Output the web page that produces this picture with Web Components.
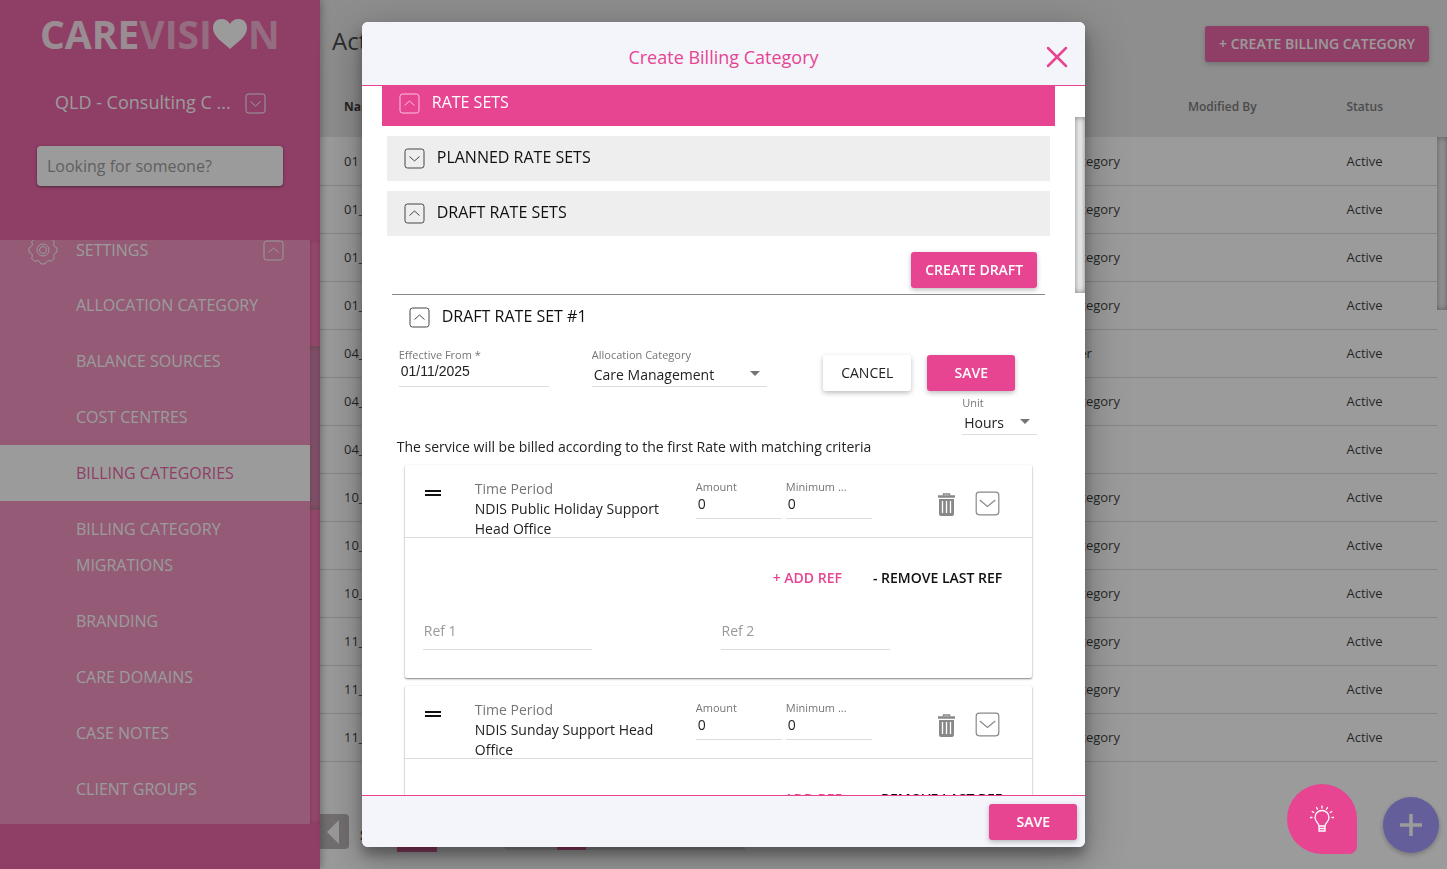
<!DOCTYPE html>
<html lang="en">
<head>
<meta charset="utf-8">
<title>CareVision - Billing Categories</title>
<style>
  html, body {
    height: 100%;
    margin: 0;
  }

  body {
    --pink: #e74492;
    --pink-light: #f07cb4;
    --line: #dcdcdc;

    overflow: hidden;
    font-family: "Open Sans", sans-serif;
    font-size: 14px;
    color: #222;
  }
</style>
</head>
<body>
<care-app></care-app>

<script>
const menuItems = [
  "ALLOCATION CATEGORY",
  "BALANCE SOURCES",
  "COST CENTRES",
  "BILLING CATEGORIES",
  "BILLING CATEGORY MIGRATIONS",
  "BRANDING",
  "CARE DOMAINS",
  "CASE NOTES",
  "CLIENT GROUPS",
];

const categories = [
  ["01", "Billing Category"],
  ["01_", "Billing Category"],
  ["01_", "Billing Category"],
  ["01_", "Billing Category"],
  ["04_", "Rate Other"],
  ["04_", "Billing Category"],
  ["04_", ""],
  ["10_", "Billing Category"],
  ["10_", "Billing Category"],
  ["10_", "Billing Category"],
  ["11_", "Billing Category"],
  ["11_", "Billing Category"],
  ["11_", "Billing Category"],
];

const resetStyle = `
  * { box-sizing: border-box; }
  button, select, input { font-family: inherit; color: inherit; }
  button { border: 0; background: none; padding: 0; cursor: pointer; }
`;

// outline of a cog: a ring whose radius steps between root and tip
function cogPath(teeth, inner, outer) {
  const step = (Math.PI * 2) / teeth;
  const point = (radius, angle) =>
    `${(15 + radius * Math.cos(angle)).toFixed(2)} ${(15 + radius * Math.sin(angle)).toFixed(2)}`;
  let path = "";

  for (let i = 0; i < teeth; i++) {
    const a = i * step;
    path += `${i ? "L" : "M"}${point(outer, a - step * 0.2)}`;
    path += `A${outer} ${outer} 0 0 1 ${point(outer, a + step * 0.2)}`;
    path += `Q${point(inner - 1, a + step * 0.5)} ${point(outer, a + step * 0.8)}`;
  }

  return path + "Z";
}

class ChevronBox extends HTMLElement {
  connectedCallback() {
    const size = this.getAttribute("size") || 21;
    const arrows = {
      up: "M5.500 12.500L10.500 8l5 4.500",
      down: "M5.500 8.500L10.500 13l5-4.500",
      wide: "M4 7.500L10.500 13L17 7.500",
    };

    this.attachShadow({ mode: "open" }).innerHTML = `
      <style>
        :host { display: inline-flex; flex: none; }
        svg { display: block; }
      </style>
      <svg width="${size}" height="${size}" viewBox="0 0 21 21" fill="none" stroke="currentColor" stroke-width="1">
        <rect x="1" y="1" width="19" height="19" rx="2.500"/>
        <path d="${arrows[this.getAttribute("dir")]}"/>
      </svg>
    `;
  }
}

class CareButton extends HTMLElement {
  connectedCallback() {
    this.attachShadow({ mode: "open" }).innerHTML = `
      <style>
        ${resetStyle}
        :host { display: inline-block; flex: none; }
        button {
          display: block;
          min-width: 88px;
          height: 36px;
          padding: 0 14px;
          border-radius: 3px;
          background: var(--pink);
          color: #fff;
          font-size: 14px;
          font-weight: 600;
          line-height: 36px;
          white-space: nowrap;
          box-shadow: 0 2px 5px rgba(0, 0, 0, 0.26);
        }
        :host([kind="plain"]) button {
          background: #fff;
          color: #222;
          font-weight: 400;
        }
        :host([kind="link"]) button,
        :host([kind="link-dark"]) button {
          min-width: 0;
          padding: 0;
          background: none;
          box-shadow: none;
          color: var(--pink);
        }
        :host([kind="link-dark"]) button { color: #111; }
      </style>
      <button type="button"><slot></slot></button>
    `;
  }
}

class CareField extends HTMLElement {
  connectedCallback() {
    const label = this.getAttribute("label") || "";
    const value = this.getAttribute("value") || "";
    const hint = this.getAttribute("placeholder") || "";

    this.attachShadow({ mode: "open" }).innerHTML = `
      <style>
        ${resetStyle}
        :host { display: block; }
        label {
          display: block;
          height: 16px;
          overflow: hidden;
          color: #757575;
          font-size: 11px;
          line-height: 16px;
          white-space: nowrap;
        }
        input {
          display: block;
          width: 100%;
          height: 24px;
          padding: 0 2px 6px;
          border: 0;
          border-bottom: 1px solid var(--line);
          background: none;
          font-size: 14px;
          outline: 0;
        }
        :host([date]) input { font-family: "Liberation Sans", sans-serif; }
        input::placeholder { color: #999; opacity: 1; }
        :host([placeholder]) input { height: 30px; padding: 0 1px 8px; }
      </style>
      ${label ? `<label for="input">${label}</label>` : ""}
      <input id="input" type="text" value="${value}" placeholder="${hint}" ${hint ? `aria-label="${hint}"` : ""}>
    `;
  }
}

class CareSelect extends HTMLElement {
  connectedCallback() {
    this.attachShadow({ mode: "open" }).innerHTML = `
      <style>
        ${resetStyle}
        :host { display: block; }
        label {
          display: block;
          color: #757575;
          font-size: 11px;
          line-height: 16px;
        }
        .box {
          display: grid;
          align-items: center;
          border-bottom: 1px solid var(--line);
        }
        select, svg { grid-area: 1 / 1; }
        select {
          appearance: none;
          width: 100%;
          height: 23px;
          padding: 0 24px 0 2px;
          border: 0;
          background: none;
          font-size: 14px;
          outline: 0;
        }
        svg {
          justify-self: end;
          margin: 0 7px 1px 0;
          pointer-events: none;
        }
      </style>
      <label for="select">${this.getAttribute("label")}</label>
      <div class="box">
        <select id="select"><option>${this.getAttribute("value")}</option></select>
        <svg width="10" height="5" viewBox="0 0 10 5"><path d="M0 0h10L5 5z" fill="#757575"/></svg>
      </div>
    `;
  }
}

class AccordionBar extends HTMLElement {
  connectedCallback() {
    this.attachShadow({ mode: "open" }).innerHTML = `
      <style>
        ${resetStyle}
        :host { display: block; color: #111; }
        button {
          display: flex;
          align-items: center;
          gap: 12px;
          width: 100%;
          height: 45px;
          padding: 0 17px;
          font-size: 16px;
          text-align: left;
        }
        span { padding-bottom: 2px; }
        chevron-box { color: #444; }
        :host([tone="grey"]) button { background: #eee; }
        :host([tone="pink"]) button { background: var(--pink); color: #fff; }
        :host([tone="pink"]) chevron-box { color: #fbc4de; }
      </style>
      <button type="button">
        <chevron-box dir="${this.getAttribute("dir")}"></chevron-box>
        <span><slot></slot></span>
      </button>
    `;
  }
}

class RateCard extends HTMLElement {
  connectedCallback() {
    this.attachShadow({ mode: "open" }).innerHTML = `
      <style>
        ${resetStyle}
        :host {
          display: block;
          border-radius: 2px;
          background: #fff;
          box-shadow: 0 1px 2px rgba(0, 0, 0, 0.5);
        }
        header {
          display: flex;
          align-items: flex-start;
          height: 73px;
          padding: 14px 32px 0 20px;
          border-bottom: 1px solid var(--line);
        }
        .handle {
          width: 16px;
          height: 6px;
          margin: 11px 34px 0 0;
          border: solid #111;
          border-width: 2px 0;
          flex: none;
        }
        .period {
          width: 221px;
          padding-right: 24px;
          line-height: 20px;
        }
        .period span { display: block; color: #757575; }
        .amounts { display: flex; gap: 4px; }
        .amounts care-field { width: 86px; }
        .actions {
          display: flex;
          align-items: center;
          gap: 19px;
          margin: 12px 0 0 auto;
          color: #888;
        }
        .actions button { display: block; color: inherit; }
        svg { display: block; }
        .links {
          display: flex;
          justify-content: flex-end;
          gap: 31px;
          padding: 22px 30px 0;
        }
        .refs {
          display: grid;
          grid-template-columns: 1fr 1fr;
          padding: 24px 14px 28px 18px;
        }
        .refs care-field { width: 169px; }
      </style>
      <header>
        <div class="handle"></div>
        <div class="period"><span>Time Period</span><slot></slot></div>
        <div class="amounts">
          <care-field label="Amount" value="0"></care-field>
          <care-field label="Minimum ..." value="0"></care-field>
        </div>
        <div class="actions">
          <button type="button" aria-label="Delete rate">
            <svg width="19" height="25" viewBox="0 0 19 25" fill="none" stroke="currentColor">
              <path d="M6.500 2.500V1h6v1.500" stroke-width="1.500"/>
              <path d="M1 3.500h17" stroke-width="2.500"/>
              <path d="M2 6h15v15a2 2 0 0 1-2 2H4a2 2 0 0 1-2-2z" fill="currentColor" stroke="none"/>
              <path d="M5.500 8v12M9.500 8v12M13.500 8v12" stroke="#fff" stroke-width="1.300"/>
            </svg>
          </button>
          <button type="button" aria-label="Expand rate"><chevron-box dir="wide" size="25"></chevron-box></button>
        </div>
      </header>
      <div class="links">
        <care-button kind="link">+ ADD REF</care-button>
        <care-button kind="link-dark">- REMOVE LAST REF</care-button>
      </div>
      <div class="refs">
        <care-field placeholder="Ref 1"></care-field>
        <care-field placeholder="Ref 2"></care-field>
      </div>
    `;
  }
}

class CareSidebar extends HTMLElement {
  connectedCallback() {
    const links = menuItems
      .map(
        (item) =>
          `<a href="#" ${item === "BILLING CATEGORIES" ? 'class="active"' : ""}>${item}</a>`
      )
      .join("");

    this.attachShadow({ mode: "open" }).innerHTML = `
      <style>
        ${resetStyle}
        :host {
          display: flex;
          flex-direction: column;
          width: 320px;
          flex: none;
          background: var(--pink);
          color: #fff;
          box-shadow: 1px 0 8px rgba(0, 0, 0, 0.4);
          z-index: 1;
        }
        .top { height: 240px; flex: none; padding: 8px 37px 0; }
        .logo {
          display: flex;
          align-items: center;
          height: 52px;
          padding-left: 3px;
          font-size: 39px;
          font-weight: 700;
          line-height: 52px;
        }
        .logo .bold { opacity: 0.85; }
        .logo .light { opacity: 0.5; }
        .logo svg { display: block; flex: none; }
        .tenant {
          display: flex;
          align-items: center;
          gap: 14px;
          width: 100%;
          height: 24px;
          margin-top: 31px;
          padding-left: 18px;
          font-size: 18px;
        }
        .tenant span { padding-bottom: 2px; }
        input {
          display: block;
          width: 100%;
          height: 40px;
          margin-top: 31px;
          padding: 0 10px;
          border: 0;
          border-radius: 4px;
          background: #fff;
          box-shadow: 0 1px 3px rgba(0, 0, 0, 0.6);
          font-size: 16px;
        }
        input::placeholder { color: #888; opacity: 1; }
        .scroll {
          display: flex;
          flex: 1;
          min-height: 0;
          margin-bottom: 45px;
          overflow: hidden;
          background: var(--pink-light);
        }
        nav { flex: 1; margin-top: -19px; }
        a {
          display: block;
          padding: 10px 48px 10px 76px;
          color: #fff;
          font-size: 16px;
          line-height: 36px;
          text-decoration: none;
        }
        .group {
          display: flex;
          align-items: center;
          width: 100%;
          height: 56px;
          padding: 2px 26px 0 28px;
          font-size: 16px;
          line-height: 20px;
        }
        .group span { flex: 1; padding-left: 18px; text-align: left; }
        a.active { background: #fff; color: var(--pink); }
        .track {
          width: 10px;
          padding-top: 106px;
          background: #ea5ca0;
          box-shadow: inset 0 0 5px rgba(180, 0, 90, 0.5);
        }
        .thumb {
          height: 164px;
          background: #cc6a9b;
          box-shadow: inset 0 0 6px rgba(0, 0, 0, 0.3);
        }
      </style>
      <div class="top">
        <div class="logo">
          <span class="bold">CARE</span><span class="light">VISI</span>
          <svg width="36" height="32" viewBox="0 0 36 32"><path d="M18 31C12 25 1 19 1 10 1 4 5 1 9.500 1 13.500 1 16.500 3 18 6c1.500-3 4.500-5 8.500-5C31 1 35 4 35 10c0 9-11 15-17 21z" fill="#fff"/></svg>
          <span class="light">N</span>
        </div>
        <button type="button" class="tenant">
          <span>QLD - Consulting C ...</span>
          <chevron-box dir="down"></chevron-box>
        </button>
        <input type="text" placeholder="Looking for someone?" aria-label="Looking for someone?">
      </div>
      <div class="scroll">
        <nav>
          <button type="button" class="group">
            <svg width="30" height="30" viewBox="0 0 30 30" fill="none" stroke="#fff">
              <path d="${cogPath(8, 11, 14)}"/>
              <circle cx="15" cy="15" r="6"/>
              <circle cx="15" cy="15" r="3.500"/>
            </svg>
            <span>SETTINGS</span>
            <chevron-box dir="up"></chevron-box>
          </button>
          ${links}
        </nav>
        <div class="track"><div class="thumb"></div></div>
      </div>
    `;
  }
}

class CategoryTable extends HTMLElement {
  connectedCallback() {
    const rows = categories
      .map(
        ([name, type]) =>
          `<tr><td>${name}</td><td>${type}</td><td></td><td>Active</td></tr>`
      )
      .join("");

    this.attachShadow({ mode: "open" }).innerHTML = `
      <style>
        ${resetStyle}
        :host { display: flex; background: #fff; }
        table {
          flex: 1;
          border-collapse: collapse;
          table-layout: fixed;
          font-size: 13px;
          color: #111;
        }
        th, td { padding: 0; text-align: left; }
        th:first-child, td:first-child { padding-left: 24px; }
        thead tr { height: 61px; background: #e4e4e4; }
        th { color: #5e5e5e; font-size: 12px; font-weight: 600; }
        th:first-child { color: #111; font-weight: 700; }
        tbody tr { height: 48px; border-bottom: 1px solid #d4d4d4; }
        .name { width: 63.2%; }
        .type { width: 14.5%; }
        .modified { width: 14.2%; }
        .track { width: 10px; border-top: 61px solid #e4e4e4; }
        .thumb {
          height: 173px;
          background: #f2f2f2;
          box-shadow: inset 0 0 6px rgba(0, 0, 0, 0.5);
        }
      </style>
      <table>
        <colgroup><col class="name"><col class="type"><col class="modified"><col></colgroup>
        <thead><tr><th>Name</th><th></th><th>Modified By</th><th>Status</th></tr></thead>
        <tbody>${rows}</tbody>
      </table>
      <div class="track"><div class="thumb"></div></div>
    `;
  }
}

class BillingDialog extends HTMLElement {
  connectedCallback() {
    this.attachShadow({ mode: "open" }).innerHTML = `
      <style>
        ${resetStyle}
        :host {
          display: flex;
          flex-direction: column;
          width: 50%;
          height: 95%;
          overflow: hidden;
          border-radius: 6px;
          background: #fff;
          box-shadow: 0 8px 12px rgba(0, 0, 0, 0.3), 0 12px 40px 4px rgba(0, 0, 0, 0.25);
        }
        .head {
          display: grid;
          grid-template-columns: 1fr auto 1fr;
          align-items: center;
          height: 64px;
          flex: none;
          padding: 8px 16px 0;
          border-bottom: 1px solid var(--pink);
          background: #f3f5fa;
        }
        h2 {
          grid-column: 2;
          margin: 0;
          color: var(--pink);
          font-size: 18px;
          font-weight: 400;
        }
        .close { justify-self: end; }
        .close svg { display: block; }
        .body { display: flex; flex: 1; min-height: 0; overflow: hidden; }
        .content {
          flex: 1;
          min-width: 0;
          margin-top: -5px;
          padding: 0 20px;
        }
        .sets {
          display: flex;
          flex-direction: column;
          gap: 10px;
          padding: 10px 5px 0;
        }
        .drafts { padding: 16px 10px 0; }
        .new {
          display: flex;
          justify-content: flex-end;
          padding: 0 8px 6px;
          border-bottom: 1px solid #888;
        }
        .form {
          display: flex;
          align-items: flex-start;
          padding: 7px 30px 0 7px;
        }
        .date { width: 150px; }
        .category { width: 175px; margin-left: 43px; }
        .buttons { display: flex; gap: 16px; margin: 8px 0 0 auto; }
        .unit { width: 75px; margin: 4px 8px 0 auto; }
        p { margin: 2px 5px 8px; line-height: 20px; }
        .cards {
          display: flex;
          flex-direction: column;
          gap: 8px;
          padding: 0 13px;
        }
        .track { width: 10px; padding-top: 31px; }
        .thumb {
          height: 176px;
          background: #f2f2f2;
          box-shadow: inset 0 0 6px rgba(0, 0, 0, 0.5);
        }
        .foot {
          display: flex;
          align-items: center;
          justify-content: flex-end;
          height: 52px;
          flex: none;
          padding: 0 8px;
          border-top: 1px solid var(--pink);
          background: #f3f5fa;
        }
      </style>
      <div class="head">
        <h2>Create Billing Category</h2>
        <button type="button" class="close" aria-label="Close">
          <svg width="24" height="24" viewBox="0 0 24 24" fill="none" stroke="#e74492" stroke-width="2.500" stroke-linecap="round"><path d="M3 3l18 18M21 3L3 21"/></svg>
        </button>
      </div>
      <div class="body">
        <div class="content">
          <accordion-bar tone="pink" dir="up">RATE SETS</accordion-bar>
          <div class="sets">
            <accordion-bar tone="grey" dir="down">PLANNED RATE SETS</accordion-bar>
            <accordion-bar tone="grey" dir="up">DRAFT RATE SETS</accordion-bar>
          </div>
          <div class="drafts">
            <div class="new"><care-button>CREATE DRAFT</care-button></div>
            <accordion-bar dir="up">DRAFT RATE SET #1</accordion-bar>
            <div class="form">
              <care-field class="date" date label="Effective From *" value="01/11/2025"></care-field>
              <care-select class="category" label="Allocation Category" value="Care Management"></care-select>
              <div class="buttons">
                <care-button kind="plain">CANCEL</care-button>
                <care-button>SAVE</care-button>
              </div>
            </div>
            <care-select class="unit" label="Unit" value="Hours"></care-select>
            <p>The service will be billed according to the first Rate with matching criteria</p>
            <div class="cards">
              <rate-card>NDIS Public Holiday Support Head Office</rate-card>
              <rate-card>NDIS Sunday Support Head Office</rate-card>
            </div>
          </div>
        </div>
        <div class="track"><div class="thumb"></div></div>
      </div>
      <div class="foot"><care-button>SAVE</care-button></div>
    `;
    this.setAttribute("role", "dialog");
    this.setAttribute("aria-label", "Create Billing Category");
  }
}

class CareApp extends HTMLElement {
  connectedCallback() {
    this.attachShadow({ mode: "open" }).innerHTML = `
      <style>
        ${resetStyle}
        :host { display: flex; height: 100vh; }
        main {
          position: relative;
          display: flex;
          flex-direction: column;
          flex: 1;
          min-width: 0;
          background: #fff;
        }
        .title {
          display: flex;
          align-items: center;
          justify-content: space-between;
          height: 76px;
          flex: none;
          padding: 12px 18px 0 12px;
          background: #e4e4e4;
        }
        h1 { margin: 0; font-size: 24px; font-weight: 400; line-height: 36px; padding-bottom: 6px; }
        .pager {
          display: flex;
          align-items: center;
          height: 36px;
          margin: auto 0 17px;
          padding-left: 40px;
          font-weight: 700;
        }
        .size { width: 40px; height: 36px; margin-left: 29px; background: var(--pink); }
        .pages {
          width: 240px;
          height: 32px;
          margin-left: 68px;
          padding-left: 52px;
          background: #ddd;
        }
        .page { width: 29px; height: 32px; background: var(--pink); }
        .collapse {
          position: absolute;
          left: 0;
          bottom: 20px;
          width: 29px;
          height: 35px;
          border-radius: 0 4px 4px 0;
          background: #b0a8ac;
        }
        .collapse svg { display: block; margin-left: 6px; }
        .layer {
          position: fixed;
          inset: 0;
          z-index: 3;
          display: flex;
          align-items: center;
          justify-content: center;
          background: rgba(56, 56, 56, 0.5);
        }
        .fab {
          position: fixed;
          display: flex;
          align-items: center;
          justify-content: center;
        }
        .add {
          right: 8px;
          bottom: 16px;
          z-index: 2;
          width: 56px;
          height: 56px;
          border-radius: 50%;
          background: #9084ff;
          box-shadow: 0 2px 5px rgba(0, 0, 0, 0.3);
        }
        .help {
          right: 90px;
          bottom: 15px;
          z-index: 4;
          width: 70px;
          height: 70px;
          border-radius: 35px 35px 8px 35px;
          background: var(--pink);
        }
      </style>
      <care-sidebar></care-sidebar>
      <main>
        <div class="title">
          <h1>Active Billing Categories</h1>
          <care-button>+ CREATE BILLING CATEGORY</care-button>
        </div>
        <category-table></category-table>
        <div class="pager">
          <span>S</span>
          <div class="size"></div>
          <div class="pages"><div class="page"></div></div>
        </div>
        <button type="button" class="collapse" aria-label="Collapse menu">
          <svg width="14" height="24" viewBox="0 0 14 24"><path d="M13 0v24L1 12z" fill="#fff"/></svg>
        </button>
      </main>
      <button type="button" class="fab add" aria-label="Add">
        <svg width="24" height="24" viewBox="0 0 24 24" stroke="#fff" stroke-width="3.500"><path d="M12 1v22M1 12h22"/></svg>
      </button>
      <div class="layer"><billing-dialog></billing-dialog></div>
      <button type="button" class="fab help" aria-label="Help">
        <svg width="26" height="28" viewBox="0 0 26 28" fill="none" stroke="#fff" stroke-width="1.300" stroke-linecap="round">
          <path d="M10 21c0-3-4-4-4-8.500a7 7 0 0 1 14 0c0 4.500-4 5.500-4 8.500zM10 21v5h6v-5M10 23.500h6"/>
          <path d="M13 1v2M7.500 2.500l1 1.800M18.500 2.500l-1 1.800M3.200 6.500l1.600 1M22.800 6.500l-1.600 1M1.500 12.500h1.500M23 12.500h1.500"/>
        </svg>
      </button>
    `;
  }
}

customElements.define("chevron-box", ChevronBox);
customElements.define("care-button", CareButton);
customElements.define("care-field", CareField);
customElements.define("care-select", CareSelect);
customElements.define("accordion-bar", AccordionBar);
customElements.define("rate-card", RateCard);
customElements.define("care-sidebar", CareSidebar);
customElements.define("category-table", CategoryTable);
customElements.define("billing-dialog", BillingDialog);
customElements.define("care-app", CareApp);
</script>
</body>
</html>
